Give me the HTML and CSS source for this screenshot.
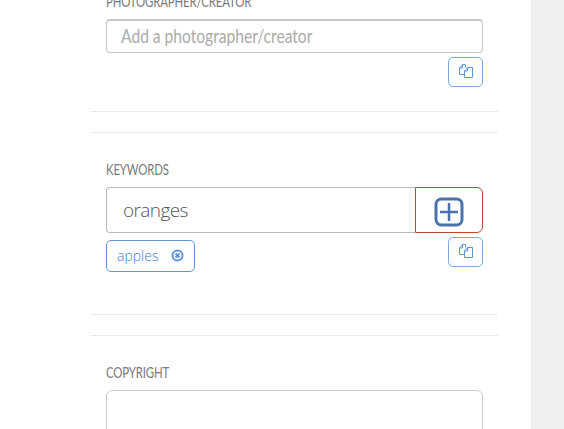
FILE: index.html
```html
<!DOCTYPE html>
<html lang="en">
<head>
    <meta charset="UTF-8">
    <title>Edit metadata</title>
    <link rel="stylesheet" href="styles.css">
</head>
<body>
    <div class="page">
        <main class="content">
            <section class="section section-first">
                <label class="field-label" for="creator">PHOTOGRAPHER/CREATOR</label>
                <div class="input-frame">
                    <input class="text-input" type="text" id="creator" placeholder="Add a photographer/creator">
                </div>
                <div class="copy-row">
                    <button class="copy-btn" type="button" aria-label="Copy">
                        <svg width="16" height="16" viewBox="0 0 16 16"><path class="copy-icon" d="M6.500 10.500H1.500V4L4.500 .5H7.500V3.500M4.500 .5V4H1.500M9.500 3.500H14.500V13.500H6.500V7L9.500 3.500ZM9.500 3.500V7H6.500"/></svg>
                    </button>
                </div>
            </section>

            <section class="section section-keywords">
                <label class="field-label" for="keywords">KEYWORDS</label>
                <div class="input-group">
                    <input class="keyword-input" type="text" id="keywords" value="oranges">
                    <button class="add-btn" type="button" aria-label="Add keyword">
                        <svg width="30" height="30" viewBox="0 0 30 30"><rect class="add-icon" x="2" y="2" width="26" height="26" rx="5.500"/><path class="add-icon-plus" d="M15 6V24M6 15H24"/></svg>
                    </button>
                </div>
                <div class="tag-row">
                    <span class="tag">apples
                        <svg width="13" height="13" viewBox="0 0 13 13"><circle class="tag-x-ring" cx="6.500" cy="6.500" r="5"/><path class="tag-x" d="M4.500 4.500L8.500 8.500M8.500 4.500L4.500 8.500"/></svg>
                    </span>
                    <button class="copy-btn" type="button" aria-label="Copy">
                        <svg width="16" height="16" viewBox="0 0 16 16"><path class="copy-icon" d="M6.500 10.500H1.500V4L4.500 .5H7.500V3.500M4.500 .5V4H1.500M9.500 3.500H14.500V13.500H6.500V7L9.500 3.500ZM9.500 3.500V7H6.500"/></svg>
                    </button>
                </div>
            </section>

            <section class="section section-last">
                <label class="field-label" for="copyright">COPYRIGHT</label>
                <textarea class="text-area" id="copyright"></textarea>
            </section>
        </main>
        <aside class="sidebar"></aside>
    </div>
</body>
</html>
```

FILE: styles.css
```css
html, body {
    margin: 0;
    padding: 0;
    height: 100%;
    overflow: hidden;
}
body {
    font-family: "Open Sans", Arial, sans-serif;
    background-color: #fff;
    color: #666;
}
.page {
    display: flex;
    height: 429px;
    overflow: hidden;
}
.content {
    width: 407px;
    margin-left: 91px;
    margin-right: 33px;
    flex: none;
}
.sidebar {
    flex: 1;
    background-color: #f0f0f0;
}
.section {
    padding: 0 15px;
    border-bottom: 1px solid #e9e9e9;
}
.section-first {
    margin-top: -7px;
    height: 118px;
    margin-bottom: 20px;
}
.section-keywords {
    padding-top: 28px;
    height: 153px;
    margin-bottom: 20px;
    border-top: 1px solid #e9e9e9;
}
.section-last {
    padding-top: 28px;
    border-top: 1px solid #e9e9e9;
    border-bottom: none;
}
.field-label {
    display: block;
    height: 18px;
    line-height: 16px;
    font-family: Lato, Arial, sans-serif;
    font-size: 15px;
    letter-spacing: -.2px;
    color: #7a7a7a;
    transform: scaleX(.76);
    transform-origin: left center;
}
.input-frame {
    box-sizing: border-box;
    height: 34px;
    margin-top: 8px;
    padding: 0 14px 3px;
    border: 1px solid #c6c6c6;
    border-top: 2px solid #c6c6c6;
    border-radius: 4px;
    overflow: hidden;
}
.text-input {
    display: block;
    box-sizing: border-box;
    width: 120%;
    height: 100%;
    padding: 0;
    border: none;
    outline: none;
    background: none;
    font-family: Lato, Arial, sans-serif;
    font-size: 20px;
    color: #666;
    transform: scaleX(.78);
    transform-origin: left center;
}
.text-input::placeholder {
    color: #aaa;
    opacity: 1;
}
.copy-row {
    display: flex;
    justify-content: flex-end;
    margin-top: 4px;
}
.copy-btn {
    display: flex;
    align-items: center;
    justify-content: center;
    box-sizing: border-box;
    width: 35px;
    height: 30px;
    padding: 0;
    background: #fff;
    border: 1px solid #7aa9e0;
    border-radius: 5px;
}
.copy-icon {
    fill: none;
    stroke: #5e95d8;
    stroke-width: 1;
}
.input-group {
    display: flex;
    height: 46px;
    margin-top: 8px;
}
.keyword-input {
    flex: 1;
    min-width: 0;
    box-sizing: border-box;
    padding: 0 16px;
    border: 1px solid #bbb;
    border-right: none;
    border-radius: 4px 0 0 4px;
    font-family: "Open Sans", Arial, sans-serif;
    font-weight: 300;
    font-size: 19px;
    letter-spacing: -.6px;
    color: #555;
}
.add-btn {
    display: flex;
    align-items: center;
    justify-content: center;
    box-sizing: border-box;
    width: 68px;
    padding: 3px 0 0;
    background: #fff;
    border: 1px solid #b8493c;
    border-radius: 0 6px 6px 0;
}
.add-icon {
    fill: none;
    stroke: #4a72ae;
    stroke-width: 3;
}
.add-icon-plus {
    fill: none;
    stroke: #4a72ae;
    stroke-width: 2.500;
}
.tag-row {
    display: flex;
    justify-content: space-between;
    align-items: flex-start;
    margin-top: 4px;
}
.tag {
    display: flex;
    align-items: center;
    justify-content: space-between;
    box-sizing: border-box;
    width: 89px;
    height: 32px;
    margin-top: 3px;
    padding: 0 10px 2px;
    border: 1px solid #5e95d8;
    border-radius: 5px;
    font-weight: 300;
    font-size: 14px;
    color: #3f7fd0;
}
.tag-x-ring {
    fill: none;
    stroke: #5e95d8;
    stroke-width: 2;
}
.tag-x {
    stroke: #5e95d8;
    stroke-width: 2;
}
.text-area {
    display: block;
    box-sizing: border-box;
    width: 100%;
    height: 80px;
    margin-top: 8px;
    border: 1px solid #ccc;
    border-radius: 6px;
    resize: none;
}
```
